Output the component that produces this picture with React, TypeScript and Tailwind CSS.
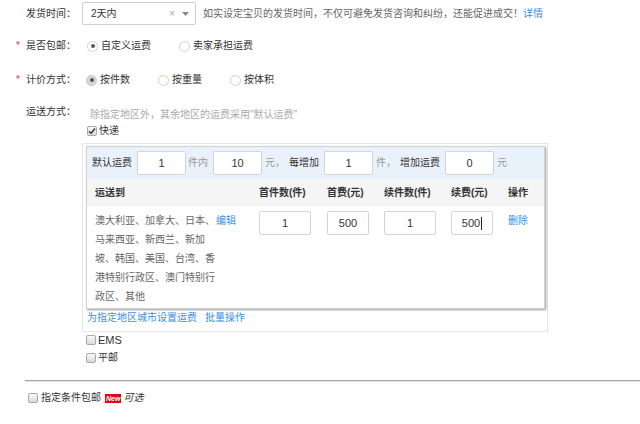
import React from "react";

function Label({ star, text }: { star?: boolean; text: string }) {
  return (
    <div className="flex w-[82px] shrink-0 items-center pl-[16px]">
      <span className="w-[10px] text-[#e4393c]">{star ? "*" : ""}</span>
      <span className="text-[#333]">{text}</span>
    </div>
  );
}

function Radio({ checked, filled }: { checked?: boolean; filled?: boolean }) {
  return (
    <span
      className={
        "flex h-[11px] w-[11px] shrink-0 items-center justify-center rounded-full border " +
        (filled ? "border-[#c8c8c8] bg-[#d6d6d6]" : "border-[#d0d0d0] bg-white")
      }
    >
      {checked ? <span className="h-[4px] w-[4px] rounded-full bg-[#555]" /> : null}
    </span>
  );
}

function Check({ checked }: { checked?: boolean }) {
  return (
    <span className="flex h-[10px] w-[10px] shrink-0 items-center justify-center rounded-[2px] border border-[#a8a8a8] bg-gradient-to-b from-[#fafafa] to-[#d8d8d8]">
      {checked ? (
        <svg width="8" height="8" viewBox="0 0 8 8">
          <path d="M1 4.2 L3.1 6.3 L7 1.5" fill="none" stroke="#333" strokeWidth="1.4" />
        </svg>
      ) : null}
    </span>
  );
}

function Inp({ v, w, cursor }: { v: string; w: string; cursor?: boolean }) {
  return (
    <div
      className={
        "flex h-[24px] items-center justify-center rounded-[2px] border border-[#d4d4d4] bg-white text-[11px] text-[#333] " +
        w
      }
    >
      <span>{v}</span>
      {cursor ? <span className="ml-[1px] h-[13px] w-[1px] bg-[#222]" /> : null}
    </div>
  );
}

export default function App() {
  return (
    <div className="relative h-[424px] w-[640px] overflow-hidden bg-white text-[10px] leading-none text-[#333] font-['Liberation_Sans','Noto_Sans_CJK_SC',sans-serif]">
      {/* Row 1 */}
      <div className="mt-[2px] flex h-[23px] items-center">
        <Label text="发货时间：" />
        <div className="flex h-[23px] w-[114px] items-center rounded-[2px] border border-[#cfcfcf] pl-[8px] pr-[6px]">
          <span className="flex-1 text-[#333]">2天内</span>
          <span className="mr-[7px] text-[10px] text-[#aaa]">×</span>
          <svg width="7" height="4" viewBox="0 0 7 4">
            <path d="M0 0 L7 0 L3.5 4 Z" fill="#888" />
          </svg>
        </div>
        <span className="ml-[7px] text-[#666]">
          如实设定宝贝的发货时间，不仅可避免发货咨询和纠纷，还能促进成交！
          <span className="text-[#3a8ee8]">详情</span>
        </span>
      </div>

      {/* Row 2 */}
      <div className="mt-[11px] flex h-[20px] items-center">
        <Label star text="是否包邮：" />
        <div className="flex items-center pl-[5px]">
          <Radio checked />
          <span className="ml-[3px]">自定义运费</span>
          <span className="ml-[28px]" />
          <Radio />
          <span className="ml-[3px]">卖家承担运费</span>
        </div>
      </div>

      {/* Row 3 */}
      <div className="mt-[14px] flex h-[20px] items-center">
        <Label star text="计价方式：" />
        <div className="flex items-center pl-[4px]">
          <Radio checked filled />
          <span className="ml-[3px]">按件数</span>
          <span className="ml-[28px]" />
          <Radio />
          <span className="ml-[3px]">按重量</span>
          <span className="ml-[28px]" />
          <Radio />
          <span className="ml-[3px]">按体积</span>
        </div>
      </div>

      {/* Row 4 */}
      <div className="mt-[17px] flex">
        <div className="flex h-[16px] items-start">
          <Label text="运送方式：" />
        </div>
        <div className="flex w-[466px] flex-col">
          <div className="flex h-[16px] items-center pl-[8px] text-[#aaa]">
            除指定地区外，其余地区的运费采用"默认运费"
          </div>
          <div className="flex h-[16px] items-center pl-[5px]">
            <Check checked />
            <span className="ml-[2px]">快递</span>
          </div>
          <div className="mt-[4px] border border-[#e6e6e6] pb-[6px] pl-[3px] pr-[2px] pt-[2px]">
            <div className="border border-[#d2d2d2] bg-white shadow-[1px_1px_2px_rgba(0,0,0,0.4)]">
              {/* default fee row */}
              <div className="flex h-[32px] items-center bg-[#e9f1fb] pl-[5px]">
                <span>默认运费</span>
                <span className="ml-[5px]" />
                <Inp v="1" w="w-[49px]" />
                <span className="ml-[2px] text-[#999]">件内</span>
                <span className="ml-[5px]" />
                <Inp v="10" w="w-[49px]" />
                <span className="ml-[3px] text-[#999]">元，</span>
                <span className="ml-[4px]">每增加</span>
                <span className="ml-[5px]" />
                <Inp v="1" w="w-[49px]" />
                <span className="ml-[3px] text-[#999]">件，</span>
                <span className="ml-[4px]">增加运费</span>
                <span className="ml-[5px]" />
                <Inp v="0" w="w-[49px]" />
                <span className="ml-[3px] text-[#999]">元</span>
              </div>
              {/* header */}
              <div className="grid h-[27px] grid-cols-[164px_68px_57px_67px_57px_auto] items-center bg-[#f5f5f5] pl-[8px] font-bold text-[#333]">
                <span>运送到</span>
                <span>首件数(件)</span>
                <span>首费(元)</span>
                <span>续件数(件)</span>
                <span>续费(元)</span>
                <span>操作</span>
              </div>
              {/* body */}
              <div className="grid grid-cols-[164px_68px_57px_67px_57px_auto] items-start pb-[2px] pl-[8px] pt-[5px]">
                <div className="flex">
                  <div className="w-[121px] leading-[19px] text-[#666]">
                    澳大利亚、加拿大、日本、马来西亚、新西兰、新加坡、韩国、美国、台湾、香港特别行政区、澳门特别行政区、其他
                  </div>
                  <span className="leading-[19px] text-[#3a8ee8]">编辑</span>
                </div>
                <Inp v="1" w="w-[52px]" />
                <Inp v="500" w="w-[42px]" />
                <Inp v="1" w="w-[52px]" />
                <Inp v="500" w="w-[42px]" cursor />
                <span className="leading-[19px] text-[#3a8ee8]">删除</span>
              </div>
            </div>
            <div className="mt-[2px] flex h-[14px] items-center pl-[1px] text-[#3a8ee8]">
              <span>为指定地区城市设置运费</span>
              <span className="ml-[8px]">批量操作</span>
            </div>
          </div>
          <div className="flex h-[16px] items-center pl-[4px]">
            <Check />
            <span className="ml-[2px] text-[11px]">EMS</span>
          </div>
          <div className="mt-[2px] flex h-[16px] items-center pl-[4px]">
            <Check />
            <span className="ml-[2px]">平邮</span>
          </div>
        </div>
      </div>

      {/* separator */}
      <div className="ml-[25px] mt-[14px] border-b border-t border-b-[#e2e2e2] border-t-[#a6a6a6]" />

      {/* bottom row */}
      <div className="mt-[8px] flex h-[16px] items-center pl-[28px]">
        <Check />
        <span className="ml-[3px]">指定条件包邮</span>
        <span className="ml-[4px] flex h-[9px] items-center bg-[#e60012] px-[1px] text-[7px] font-bold italic text-white">
          New
        </span>
        <span className="ml-[2px] italic">可选</span>
      </div>
    </div>
  );
}
